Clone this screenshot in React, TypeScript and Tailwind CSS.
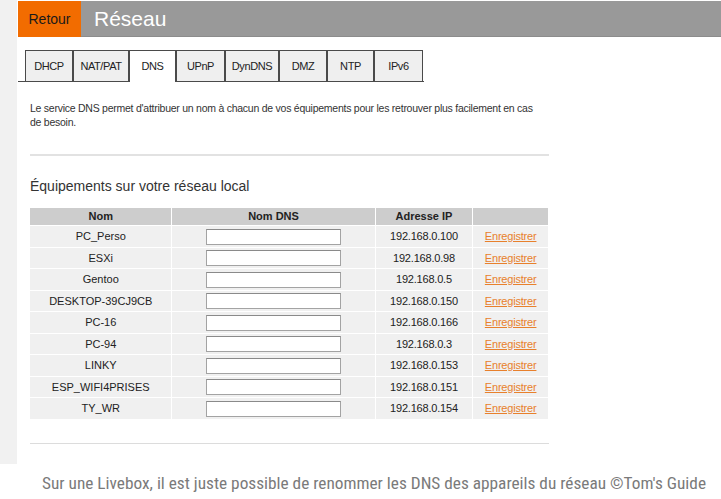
import React from "react";

const TABS = [
  { label: "DHCP", w: "w-[48px]" },
  { label: "NAT/PAT", w: "w-[56px]" },
  { label: "DNS", w: "w-[47px]" },
  { label: "UPnP", w: "w-[49px]" },
  { label: "DynDNS", w: "w-[54px]" },
  { label: "DMZ", w: "w-[48px]" },
  { label: "NTP", w: "w-[47px]" },
  { label: "IPv6", w: "w-[49px]" },
];

const DEVICES = [
  { name: "PC_Perso", ip: "192.168.0.100" },
  { name: "ESXi", ip: "192.168.0.98" },
  { name: "Gentoo", ip: "192.168.0.5" },
  { name: "DESKTOP-39CJ9CB", ip: "192.168.0.150" },
  { name: "PC-16", ip: "192.168.0.166" },
  { name: "PC-94", ip: "192.168.0.3" },
  { name: "LINKY", ip: "192.168.0.153" },
  { name: "ESP_WIFI4PRISES", ip: "192.168.0.151" },
  { name: "TY_WR", ip: "192.168.0.154" },
];

export default function App() {
  return (
    <div
      className="flex flex-col w-[721px] h-[499px] bg-white overflow-hidden"
      style={{ fontFamily: '"Liberation Sans", Arial, sans-serif' }}
    >
      <div className="flex h-[464px]">
        {/* ── left strip ── */}
        <div className="w-[17px] bg-[#f1f1f1]" />

        <div className="flex-1 flex flex-col">
          {/* ── header ── */}
          <div className="flex h-[36px] mt-[1px] ml-[1px]">
            <div className="w-[63px] bg-[#f26c00] flex items-center justify-center text-[14px] text-[#1a1a1a]">
              Retour
            </div>
            <div className="flex-1 bg-[#999999] border-b border-[#8c8c8c] flex items-center pl-[13px] text-[21px] text-white">
              Réseau
            </div>
          </div>

          {/* ── tabs ── */}
          <div className="mt-[13px] ml-[1px] w-[406px] flex pl-[7px] border-b border-[#4a4a4a] h-[32px]">
            {TABS.map(({ label, w }) => {
              const active = label === "DNS";
              return (
                <div
                  key={label}
                  className={
                    w +
                    " flex items-center justify-center border-t border-l border-r border-[#4a4a4a] text-[11px] tracking-[-0.4px] text-[#222] " +
                    (active ? "bg-white h-[32px] relative z-10" : "bg-[#efefef] h-[31px]")
                  }
                >
                  {label}
                </div>
              );
            })}
          </div>

          {/* ── content ── */}
          <div className="ml-[13px] w-[519px] flex flex-col">
            <p className="mt-[19px] w-[510px] text-[10.5px] leading-[14px] tracking-[-0.25px] text-[#333]">
              Le service DNS permet d'attribuer un nom à chacun de vos équipements pour les retrouver plus facilement en cas de besoin.
            </p>
            <div className="mt-[25px] h-[2px] bg-[#e2e2e2]" />
            <h2 className="mt-[22px] text-[14px] leading-[17px] text-[#333]">
              Équipements sur votre réseau local
            </h2>

            <table className="mt-[12px] ml-[-1px] border-separate border-spacing-[1px] text-[11px] text-[#222]">
              <thead>
                <tr className="bg-[#cdcdcd] h-[17px]">
                  <th className="w-[142px] font-bold">Nom</th>
                  <th className="w-[203px] font-bold">Nom DNS</th>
                  <th className="w-[97px] font-bold">Adresse IP</th>
                  <th className="w-[75px]" />
                </tr>
              </thead>
              <tbody>
                {DEVICES.map((d) => (
                  <tr key={d.name} className="bg-[#f0f0f0] h-[20.5px]">
                    <td className="text-center p-0">{d.name}</td>
                    <td className="text-center p-0">
                      <input
                        type="text"
                        className="align-middle w-[135px] h-[16px] bg-white border border-[#a3a3a3] border-t-[#8a8a8a]"
                      />
                    </td>
                    <td className="text-center p-0 tracking-[-0.2px]">{d.ip}</td>
                    <td className="text-center p-0">
                      <a href="#" className="text-[#e8802c] underline tracking-[-0.2px]">
                        Enregistrer
                      </a>
                    </td>
                  </tr>
                ))}
              </tbody>
            </table>

            <div className="mt-[23px] h-[1.5px] bg-[#dcdcdc]" />
          </div>
        </div>
      </div>

      {/* ── caption ── */}
      <div
        className="pl-[42px] pt-[9px] text-[17.3px] leading-[20px] text-[#7a7a7a] whitespace-nowrap"
        style={{ fontFamily: '"Roboto Condensed", "Liberation Sans Narrow", Roboto, sans-serif' }}
      >
        Sur une Livebox, il est juste possible de renommer les DNS des appareils du réseau ©Tom's Guide
      </div>
    </div>
  );
}
